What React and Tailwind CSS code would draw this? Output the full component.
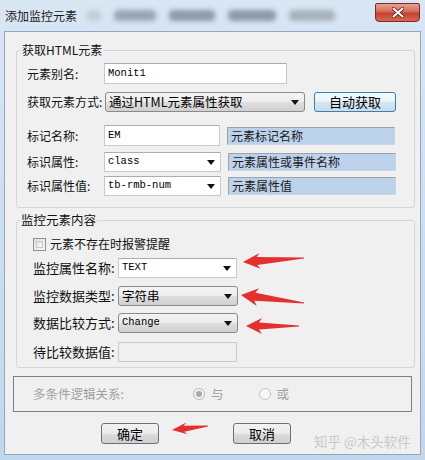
import React from "react";

// red annotation arrow, tip -> tail, tapered shaft
const Arrow = ({ tip, tail, head = 14, hw = 8, sw = 4 }) => {
  const dx = tail[0] - tip[0];
  const dy = tail[1] - tip[1];
  const len = Math.hypot(dx, dy);
  const ux = dx / len;
  const uy = dy / len;
  const nx = -uy;
  const ny = ux;
  const bx = tip[0] + ux * head;
  const by = tip[1] + uy * head;
  const pts = [
    tip,
    [bx + ux * 3 + nx * hw, by + uy * 3 + ny * hw],
    [bx + nx * sw, by + ny * sw],
    [tail[0] + nx * 0.6, tail[1] + ny * 0.6],
    [tail[0] - nx * 0.6, tail[1] - ny * 0.6],
    [bx - nx * sw, by - ny * sw],
    [bx + ux * 3 - nx * hw, by + uy * 3 - ny * hw],
  ];
  return <polygon points={pts.map((p) => p.join(",")).join(" ")} fill="#e3302e" />;
};

const Caret = () => (
  <svg width="8" height="5" viewBox="0 0 8 5" className="shrink-0">
    <path d="M0 0 H8 L4 5 Z" fill="#111" />
  </svg>
);

const TextBox = ({ value, className = "" }) => (
  <div
    className={
      "h-[21px] bg-white border border-[#c5c9d0] border-t-[#abadb3] flex items-center px-[3px] text-[10.5px] text-black " +
      className
    }
    style={{ fontFamily: '"Liberation Mono", monospace' }}
  >
    {value}
  </div>
);

// editable combo, white
const EditCombo = ({ value, className = "", mono = true }) => (
  <div
    className={
      "h-[20px] bg-white border border-[#c5c9d0] border-t-[#abadb3] flex items-center pl-[3px] pr-[5px] " +
      className
    }
  >
    <span
      className="flex-1 text-[10.5px] text-black"
      style={{ fontFamily: mono ? '"Liberation Mono", monospace' : undefined }}
    >
      {value}
    </span>
    <Caret />
  </div>
);

// dropdown list style combo, gray gradient
const ListCombo = ({ value, className = "", mono = false }) => (
  <div
    className={
      "h-[20px] rounded-[3px] border border-[#8a8a8a] bg-[linear-gradient(#f4f4f4_0%,#ececec_50%,#dedede_51%,#d0d0d0_100%)] flex items-center pl-[3px] pr-[5px] " +
      className
    }
  >
    <span
      className={"flex-1 text-black " + (mono ? "text-[10.5px]" : "text-[12.5px]")}
      style={{ fontFamily: mono ? '"Liberation Mono", monospace' : undefined }}
    >
      {value}
    </span>
    <Caret />
  </div>
);

const InfoBox = ({ children }) => (
  <div className="h-[18px] w-[168px] ml-[7px] bg-[#bcd1ea] border border-[#c8d6e6] border-t-[#9aa3ad] border-l-[#9aa3ad] flex items-center pl-[3px] text-[12px] text-[#1a1a1a]">
    {children}
  </div>
);

const Row1 = ({ label, mt, h = "h-[21px]", children }) => (
  <div className={"flex items-center " + mt + " " + h}>
    <span className="w-[77px] shrink-0 text-[12px] text-[#111]">{label}</span>
    {children}
  </div>
);

const Row2 = ({ label, mt, children }) => (
  <div className={"flex items-center h-[20px] " + mt}>
    <span className="w-[85px] shrink-0 text-[13px] text-[#111]">{label}</span>
    {children}
  </div>
);

const WinButton = ({ children, className = "" }) => (
  <div
    className={
      "h-[21px] rounded-[3px] border border-[#707070] bg-[linear-gradient(#f2f2f2_0%,#ebebeb_50%,#dddddd_51%,#cfcfcf_100%)] flex items-center justify-center text-[13px] text-black " +
      className
    }
  >
    {children}
  </div>
);

export default function App() {
  return (
    <div
      className="relative w-[425px] h-[460px] overflow-hidden bg-[linear-gradient(#d9e6f4,#c2d6ec)] flex flex-col"
      style={{ fontFamily: '"Noto Sans CJK SC", "Noto Sans", sans-serif' }}
    >
      {/* title bar */}
      <div className="h-[31px] shrink-0 flex items-start">
        <span className="pl-[5px] pt-[7px] text-[12px] text-[#1b1b1b] leading-[18px]">添加监控元素</span>
        <div className="flex items-center gap-[13px] ml-[10px] mt-[10px] blur-[2.5px]">
          <div className="w-[14px] h-[11px] bg-[#c3ccd7] rounded-sm" />
          <div className="w-[42px] h-[11px] bg-[#98a4b3] rounded-sm" />
          <div className="w-[46px] h-[11px] bg-[#8e9aab] rounded-sm" />
          <div className="w-[48px] h-[11px] bg-[#8c98a8] rounded-sm" />
          <div className="w-[46px] h-[11px] bg-[#a7b1be] rounded-sm" />
        </div>
        <div className="ml-auto mr-[5px] mt-[3px] w-[45px] h-[19px] rounded-b-[4px] rounded-t-[2px] border border-[#7a2a2a] bg-[linear-gradient(#e8a090_0%,#d56b5c_45%,#c4402f_55%,#d86a50_100%)] flex items-center justify-center">
          <svg width="12" height="11" viewBox="0 0 12 11">
            <path d="M1.5 1.5 L10.5 9.5 M10.5 1.5 L1.5 9.5" stroke="#5a1a1a" strokeWidth="3.6" strokeLinecap="round" />
            <path d="M1.5 1.5 L10.5 9.5 M10.5 1.5 L1.5 9.5" stroke="#fff" strokeWidth="2" strokeLinecap="round" />
          </svg>
        </div>
      </div>

      {/* client area */}
      <div className="ml-[4px] w-[417px] h-[424px] bg-[#f0f0f0] border border-[#91a7c2] flex flex-col">
        {/* group 1 */}
        <fieldset className="ml-[11px] mt-[10px] w-[399px] border border-[#d5d5d5] rounded-[3px] pl-[10px] pb-[11px]">
          <legend className="-ml-[7px] px-[2px] text-[12px] leading-[16px] text-[#111]">获取HTML元素</legend>
          <Row1 label="元素别名:" mt="mt-[5px]">
            <TextBox value="Monit1" className="w-[183px]" />
          </Row1>
          <Row1 label="获取元素方式:" mt="mt-[8px]" h="h-[20px]">
            <ListCombo value="通过HTML元素属性获取" className="w-[200px] ml-[1px]" />
            <WinButton className="ml-[9px] w-[82px] !h-[20px] !border-[#3c7fb1] bg-[linear-gradient(#f5fbfe_0%,#e6f2fa_50%,#d4e6f2_51%,#c8dcea_100%)] text-[12.5px]">
              自动获取
            </WinButton>
          </Row1>
          <Row1 label="标记名称:" mt="mt-[13px]">
            <TextBox value="EM" className="w-[116px]" />
            <InfoBox>元素标记名称</InfoBox>
          </Row1>
          <Row1 label="标识属性:" mt="mt-[6px]" h="h-[20px]">
            <EditCombo value="class" className="w-[117px]" />
            <InfoBox>元素属性或事件名称</InfoBox>
          </Row1>
          <Row1 label="标识属性值:" mt="mt-[4px]" h="h-[20px]">
            <EditCombo value="tb-rmb-num" className="w-[117px]" />
            <InfoBox>元素属性值</InfoBox>
          </Row1>
        </fieldset>

        {/* group 2 */}
        <fieldset className="ml-[11px] mt-[4px] w-[399px] border border-[#d5d5d5] rounded-[3px] pl-[16px] pb-[5px]">
          <legend className="-ml-[13px] px-[1px] text-[12.5px] leading-[16px] text-[#111]">监控元素内容</legend>
          <div className="flex items-center h-[14px] mt-[9px]">
            <div className="w-[13px] h-[13px] border border-[#8e8f8f] bg-[linear-gradient(135deg,#dcdcdc,#fbfbfb)] p-[2px]">
              <div className="w-full h-full border border-[#c8c8c8] bg-[linear-gradient(135deg,#e4e4e4,#f8f8f8)]" />
            </div>
            <span className="ml-[4px] text-[12px] text-[#111]">元素不存在时报警提醒</span>
          </div>
          <Row2 label="监控属性名称:" mt="mt-[7px]">
            <EditCombo value="TEXT" className="w-[119px]" />
          </Row2>
          <Row2 label="监控数据类型:" mt="mt-[8px]">
            <ListCombo value="字符串" className="w-[120px]" />
          </Row2>
          <Row2 label="数据比较方式:" mt="mt-[7px]">
            <ListCombo value="Change" mono className="w-[120px]" />
          </Row2>
          <Row2 label="待比较数据值:" mt="mt-[9px]">
            <div className="w-[119px] h-[20px] border border-[#c5c9d0] bg-[#f0f0f0]" />
          </Row2>
        </fieldset>

        {/* group 3 */}
        <div className="ml-[8px] mt-[8px] w-[399px] h-[36px] border border-[#7f7f7f] flex items-center pl-[19px] text-[12.5px] text-[#a0a0a0]">
          <span className="w-[160px]">多条件逻辑关系:</span>
          <div className="w-[12px] h-[12px] rounded-full border border-[#b8b8b8] bg-[#f4f4f4] flex items-center justify-center">
            <div className="w-[6px] h-[6px] rounded-full bg-[#a8a8a8]" />
          </div>
          <span className="ml-[6px]">与</span>
          <div className="ml-[35px] w-[12px] h-[12px] rounded-full border border-[#c4c4c4] bg-[#f6f6f6]" />
          <span className="ml-[6px]">或</span>
        </div>

        {/* buttons */}
        <div className="flex mt-[11px] ml-[96px]">
          <WinButton className="w-[58px]">确定</WinButton>
          <WinButton className="w-[58px] ml-[74px]">取消</WinButton>
        </div>
      </div>

      {/* watermark */}
      <span className="absolute left-[314px] top-[432px] whitespace-nowrap text-[13.5px] leading-[18px] text-[#c9c9c9]">知乎 @木头软件</span>

      {/* annotation arrows */}
      <svg className="absolute inset-0 pointer-events-none" width="425" height="460">
        <Arrow tip={[243, 262]} tail={[304, 258]} head={14} hw={8} sw={4} />
        <Arrow tip={[241, 295]} tail={[304, 303]} head={14} hw={9} sw={4} />
        <Arrow tip={[246, 326]} tail={[299, 326]} head={13} hw={8} sw={3.5} />
        <Arrow tip={[172, 430]} tail={[208, 426]} head={12} hw={6} sw={3} />
      </svg>
    </div>
  );
}
